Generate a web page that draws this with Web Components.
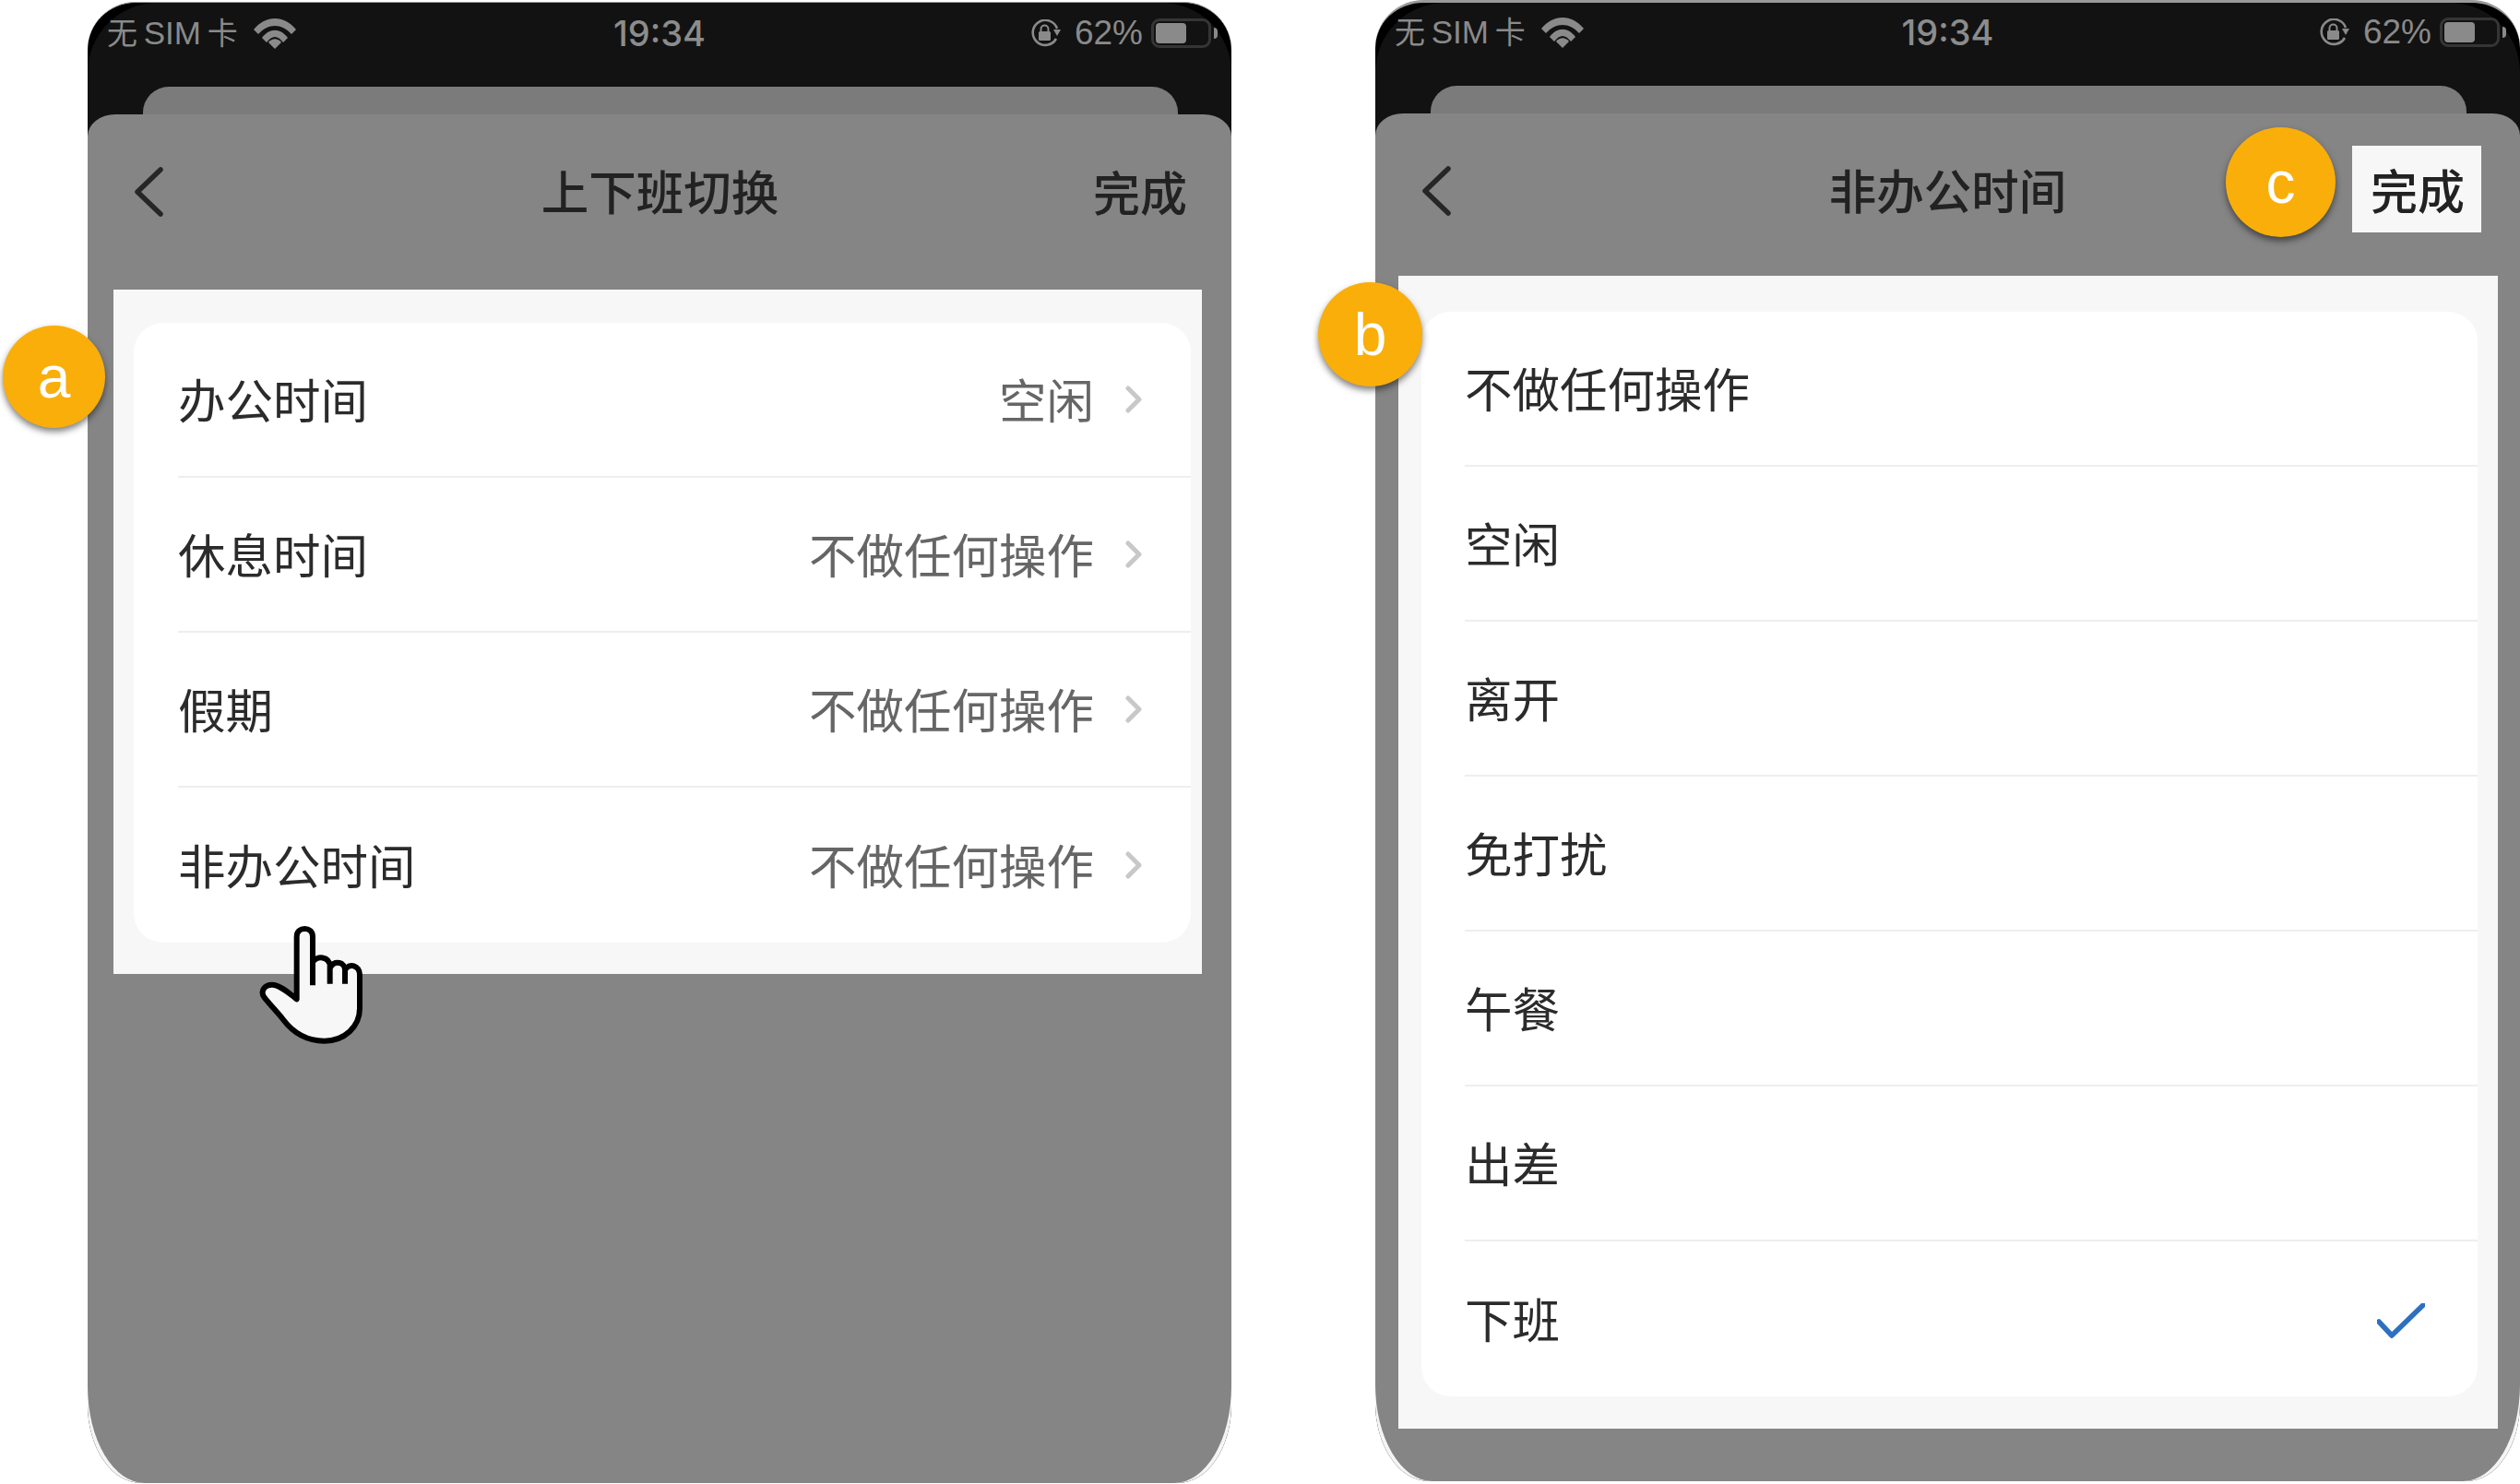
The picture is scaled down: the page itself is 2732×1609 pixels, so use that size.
<!DOCTYPE html>
<html lang="zh">
<head>
<meta charset="utf-8">
<title>上下班切换</title>
<style>
html, body { margin: 0; background: #fff; }
body { font-family: "Liberation Sans", "Noto Sans CJK SC", sans-serif; }
.stage {
    position: relative;
    width: 2732px;
    height: 1609px;
    overflow: hidden;
    box-sizing: border-box;
    padding-left: 95px;
    display: flex;
    gap: 156px;
    align-items: flex-start;
}
</style>
</head>
<body>
<div class="stage">
    <phone-screen heading="上下班切换" style="--w:1240px;--h:1606px;--edge:1px;--top:2px;--status-top:1px;--nav:190px;--panel-l:28px;--panel-r:32px;--pad:36px 12px 34px 22px;--nav-l:49px;--nav-r:48px;--arrow-x:1px;--row-l:48px;">
        <setting-row value="空闲" arrow>办公时间</setting-row>
        <setting-row value="不做任何操作" arrow>休息时间</setting-row>
        <setting-row value="不做任何操作" arrow>假期</setting-row>
        <setting-row value="不做任何操作" arrow last>非办公时间</setting-row>
    </phone-screen>
    <phone-screen heading="非办公时间" highlight style="--w:1241px;--h:1606px;--edge:3px;--top:0px;--status-top:0px;--nav:176px;--panel-l:25px;--panel-r:24px;--pad:39px 22px 35px 25px;--nav-l:60px;--nav-r:60px;--arrow-x:-10px;--row-l:47px;">
        <setting-row>不做任何操作</setting-row>
        <setting-row>空闲</setting-row>
        <setting-row>离开</setting-row>
        <setting-row>免打扰</setting-row>
        <setting-row>午餐</setting-row>
        <setting-row>出差</setting-row>
        <setting-row checked last>下班</setting-row>
    </phone-screen>
    <call-out style="left:3px;top:353px;--d:111px;">a</call-out>
    <call-out style="left:1429px;top:306px;--d:113px;">b</call-out>
    <call-out style="left:2413px;top:138px;--d:119px;">c</call-out>
    <tap-hand style="left:100px;top:880px;"></tap-hand>
</div>

<script>
class StatusBar extends HTMLElement {
    constructor() {
        super();
        this.shadowDOM = this.attachShadow({mode: 'open'});
        this.render();
    }

    render() {
        this.shadowDOM.innerHTML = `
        <style>
            :host {
                display: grid;
                grid-template-columns: 1fr auto 1fr;
                align-items: center;
                height: 64px;
                padding: 0 21px;
                color: #8a8a8a;
                font: 33px/40px "Liberation Sans", "Noto Sans CJK SC", sans-serif;
            }
            .left, .right { display: flex; align-items: center; }
            .left { gap: 17px; }
            .right { justify-content: flex-end; }
            .sim { font-size: 35px; word-spacing: -3px; }
            .sim b { font-weight: 400; font-size: 33px; }
            .time { font: 500 38px/40px Inter, "Liberation Sans", sans-serif; color: #8c8c8c; }
            .pct { font-size: 37px; margin: 0 9px 0 15px; }
            .battery {
                box-sizing: border-box;
                width: 65px;
                height: 32px;
                border: 3px solid #353535;
                border-radius: 9px;
                padding: 2px;
            }
            .battery i { display: block; width: 33px; height: 22px; background: #8a8a8a; border-radius: 4px; }
            .nub { width: 4px; height: 12px; margin: 0 -6px 0 3px; background: #8a8a8a; border-radius: 0 6px 6px 0; }
        </style>
        <div class="left">
            <span class="sim"><b>无</b> SIM <b>卡</b></span>
            <svg width="46" height="34" viewBox="0 0 46 34">
                <path fill="#8a8a8a" d="M0 13 C13 -3 33 -3 46 13 L41 18 C30 6 16 6 5 18Z"/>
                <path fill="#8a8a8a" d="M9 22 C17 11 29 11 37 22 L32 27 C26 19 20 19 14 27Z"/>
                <path fill="#8a8a8a" d="M16 27 C20 22 26 22 30 27 L23 34Z"/>
            </svg>
        </div>
        <span class="time">19:34</span>
        <div class="right">
            <svg width="33" height="30" viewBox="0 0 33 30">
                <path fill="none" stroke="#8a8a8a" stroke-width="2.6" d="M28 21 A13.5 13.5 0 1 1 29 10"/>
                <path fill="#8a8a8a" d="M25 11 L33 11 L29 18Z"/>
                <rect x="9" y="13" width="13" height="10" rx="1.5" fill="#8a8a8a"/>
                <path fill="none" stroke="#8a8a8a" stroke-width="2" d="M11.5 13 V10.5 A4 4 0 0 1 19.5 10.5 V13"/>
            </svg>
            <span class="pct">62%</span>
            <div class="battery"><i></i></div>
            <div class="nub"></div>
        </div>
        `;
    }
}

class PhoneScreen extends HTMLElement {
    constructor() {
        super();
        this.shadowDOM = this.attachShadow({mode: 'open'});
    }

    connectedCallback() {
        const done = this.hasAttribute('highlight') ? 'done on' : 'done';
        this.shadowDOM.innerHTML = `
        <style>
            :host {
                display: block;
                flex: none;
                box-sizing: border-box;
                width: var(--w);
                height: var(--h);
                margin-top: var(--top);
                border-top: var(--edge) solid #9a9a9a;
                background: #000;
                border-radius: 52px 52px 58px 58px / 52px 52px 85px 85px;
                overflow: hidden;
                font-family: "Noto Sans CJK SC", "Liberation Sans", sans-serif;
            }
            .shell {
                height: 100%;
                display: flex;
                flex-direction: column;
                background: linear-gradient(#121212 0 300px, #f5f5f5 300px);
                border-radius: 76px 76px 0 0;
            }
            status-bar { margin-top: var(--status-top); margin-bottom: 26px; flex: none; }
            .behind {
                flex: none;
                height: 30px;
                margin: 0 58px 0 60px;
                background: #7b7b7b;
                border-radius: 28px 28px 0 0;
            }
            .sheet {
                flex: 1;
                min-height: 0;
                background: #858585;
                border-radius: 30px 30px 62px 62px / 24px 24px 105px 105px;
            }
            .nav {
                box-sizing: border-box;
                height: var(--nav);
                padding: 0 var(--nav-r) 0 var(--nav-l);
            }
            .bar {
                height: 168px;
                display: grid;
                grid-template-columns: 1fr auto 1fr;
                align-items: center;
            }
            .bar svg { margin-left: var(--arrow-x); }
            .title { font-size: 51.5px; line-height: 60px; font-weight: 500; color: #222; margin-bottom: 4px; }
            .done {
                justify-self: end;
                font-size: 51px;
                line-height: 60px;
                font-weight: 500;
                color: #222;
                margin-bottom: 2px;
            }
            .done.on {
                background: #f7f7f7;
                padding: 17px 18px 17px 20px;
                margin: 0 -18px 4px 0;
            }
            .panel {
                margin: 0 var(--panel-r) 0 var(--panel-l);
                padding: var(--pad);
                background: #f7f7f7;
            }
            .card {
                background: #fff;
                border-radius: 32px;
                overflow: hidden;
            }
            svg { display: block; }
        </style>
        <div class="shell">
            <status-bar></status-bar>
            <div class="behind"></div>
            <div class="sheet">
                <div class="nav">
                    <div class="bar">
                        <svg width="32" height="54" viewBox="0 0 32 54">
                            <path d="M29 3 L4 27 L29 51" fill="none" stroke="#262626" stroke-width="5.5" stroke-linecap="round" stroke-linejoin="round"/>
                        </svg>
                        <span class="title">${this.getAttribute('heading')}</span>
                        <span class="${done}">完成</span>
                    </div>
                </div>
                <div class="panel">
                    <div class="card"><slot></slot></div>
                </div>
            </div>
        </div>
        `;
    }
}

class SettingRow extends HTMLElement {
    constructor() {
        super();
        this.shadowDOM = this.attachShadow({mode: 'open'});
    }

    connectedCallback() {
        const value = this.getAttribute('value');
        let tail = '';
        if (value) {
            tail += `<span class="value">${value}</span>`;
        }
        if (this.hasAttribute('arrow')) {
            tail += `<svg class="arrow" width="18" height="30" viewBox="0 0 18 30"><path d="M3 3 L15 15 L3 27" fill="none" stroke="#c8c8c8" stroke-width="5" stroke-linecap="round" stroke-linejoin="round"/></svg>`;
        }
        if (this.hasAttribute('checked')) {
            tail += `<svg class="check" width="52" height="38" viewBox="0 0 52 38"><path d="M2 20 L16 35 L50 2" fill="none" stroke="#2e6fc1" stroke-width="5.5" stroke-linecap="round" stroke-linejoin="round"/></svg>`;
        }
        this.shadowDOM.innerHTML = `
        <style>
            :host {
                display: block;
                height: 168px;
                padding-left: var(--row-l);
                color: #2b2b2b;
                font: 51.5px/60px "Noto Sans CJK SC", "Liberation Sans", sans-serif;
            }
            .row {
                box-sizing: border-box;
                height: 168px;
                display: flex;
                align-items: center;
                border-bottom: 2px solid #eee;
            }
            :host([last]) .row { border-bottom: 0; }
            .label { flex: 1; margin-bottom: 3px; }
            .value { color: #666; margin: 0 34px 3px 0; }
            .arrow { margin-right: 53px; }
            .check { margin-right: 57px; margin-top: 4px; }
        </style>
        <div class="row">
            <span class="label"><slot></slot></span>
            ${tail}
        </div>
        `;
    }
}

class CallOut extends HTMLElement {
    constructor() {
        super();
        this.shadowDOM = this.attachShadow({mode: 'open'});
        this.shadowDOM.innerHTML = `
        <style>
            :host {
                position: absolute;
                width: var(--d);
                height: var(--d);
                border-radius: 50%;
                background: #faae0a;
                box-shadow: 0 4px 7px rgba(0, 0, 0, .5);
                display: flex;
                align-items: center;
                justify-content: center;
                color: #fff;
                font: 64px/1 "Liberation Sans", sans-serif;
            }
        </style>
        <slot></slot>
        `;
    }
}

class TapHand extends HTMLElement {
    constructor() {
        super();
        this.shadowDOM = this.attachShadow({mode: 'open'});
        this.shadowDOM.innerHTML = `
        <style>
            :host { position: absolute; width: 400px; height: 300px; }
            svg { display: block; }
        </style>
        <svg width="400" height="300" viewBox="0 0 1200 900">
            <path fill="#f7f7f7" stroke="#000" stroke-width="18" stroke-linejoin="round" d="M665 610 L665 407 C665 372 717 372 717 407 L717 490 C730 468 770 468 775 505 C790 482 822 490 822 515 C835 490 870 500 870 530 L870 640 C870 700 820 746 755 746 C690 746 650 715 620 675 C600 650 580 630 560 605 C545 585 560 563 585 563 C610 563 640 590 665 610Z"/>
            <path fill="none" stroke="#000" stroke-width="18" d="M717 480 L717 565 M773 500 L773 560 M822 510 L822 560"/>
        </svg>
        `;
    }
}

customElements.define('status-bar', StatusBar);
customElements.define('phone-screen', PhoneScreen);
customElements.define('setting-row', SettingRow);
customElements.define('call-out', CallOut);
customElements.define('tap-hand', TapHand);
</script>
</body>
</html>
